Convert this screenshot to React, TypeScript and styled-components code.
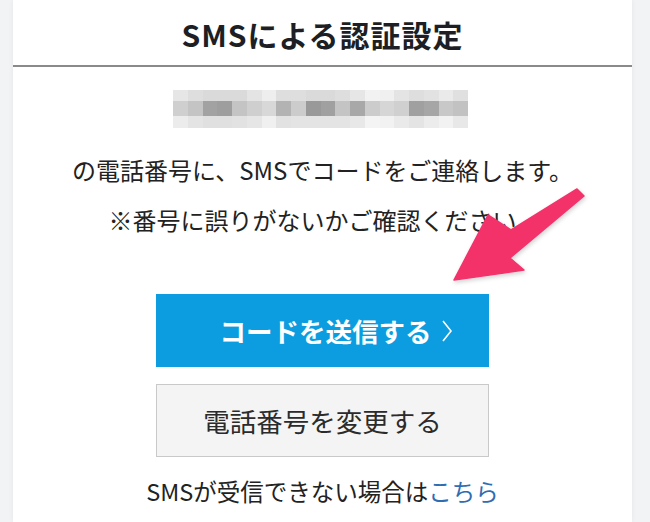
import styled, { createGlobalStyle } from "styled-components"

const GlobalStyle = createGlobalStyle`
  html, body {
    margin: 0;
    padding: 0;
    background: #f2f3f5;
  }
  body {
    font-family: "Noto Sans CJK JP", "Noto Sans", sans-serif;
    color: #222;
  }
`

// pixelated phone number, grey level of each cell, row by row
const mosaic = [
  ["e6", "de", "da", "da", "da", "e4", "ee", "de", "de", "da", "da", "de", "e6", "f2", "f0", "e4", "de", "e2", "ea", "e0"],
  ["cf", "c4", "a2", "9e", "c4", "cf", "d8", "b3", "cc", "99", "a0", "c4", "a8", "cc", "d6", "d0", "a0", "a6", "c8", "c2"],
  ["ec", "e4", "e0", "e0", "e2", "e6", "f0", "e2", "e4", "e4", "e4", "e4", "e8", "f4", "f2", "ea", "e4", "ec", "f2", "e8"],
]

function App() {
  return (
    <>
      <GlobalStyle />
      <Page>
        <Card>
          <Header>
            <Title>SMSによる認証設定</Title>
          </Header>
          <Body>
            <Mosaic>
              {mosaic.flatMap((row, r) =>
                row.map((c, i) => (
                  <Cell key={`${r}-${i}`} style={{ background: `#${c}${c}${c}` }} />
                ))
              )}
            </Mosaic>
            <Message $gap={25}>の電話番号に、SMSでコードをご連絡します。</Message>
            <Message $gap={16} $shift={20}>
              ※番号に誤りがないかご確認ください
            </Message>
            <PrimaryButton>
              コードを送信する
              <svg width="12" height="24" viewBox="0 0 12 24">
                <polyline
                  points="2,2 10,12 2,22"
                  fill="none"
                  stroke="#fff"
                  strokeWidth="1.6"
                />
              </svg>
            </PrimaryButton>
            <SecondaryButton>電話番号を変更する</SecondaryButton>
            <Footer>
              SMSが受信できない場合は<Link href="#">こちら</Link>
            </Footer>
          </Body>
        </Card>
        <Arrow viewBox="0 0 650 522">
          <defs>
            <filter id="arrowShadow" x="-20%" y="-20%" width="140%" height="140%">
              <feDropShadow dx="1" dy="2" stdDeviation="2" floodColor="#000" floodOpacity="0.18" />
            </filter>
          </defs>
          <polygon
            points="577,189 511,230 488,215 454,280 524,270 510,258 584,196"
            fill="#f3336b"
            strokeLinejoin="round"
            stroke="#f3336b"
            strokeWidth="1.5"
            filter="url(#arrowShadow)"
          />
        </Arrow>
      </Page>
    </>
  )
}

export default App

const Page = styled.div`
  position: relative;
  width: 650px;
  height: 522px;
  overflow: hidden;
`

const Card = styled.div`
  margin: 0 18px 0 13px;
  height: 522px;
  background: #fff;
  box-shadow: 0 0 5px rgba(0, 0, 0, 0.06);
`

const Header = styled.div`
  height: 67px;
  display: flex;
  align-items: center;
  justify-content: center;
  padding-top: 3px;
  box-sizing: border-box;
  border-bottom: 2px solid #8a8a8a;
`

const Title = styled.h1`
  margin: 0;
  font-size: 30px;
  font-weight: 700;
  letter-spacing: 1px;
  color: #1d1f24;
  line-height: 1;
`

const Body = styled.div`
  display: flex;
  flex-direction: column;
  align-items: center;
`

const Mosaic = styled.div`
  margin-top: 23px;
  margin-left: -4px;
  display: grid;
  grid-template-columns: repeat(20, 14.75px);
  grid-template-rows: 11px 15px 12px;
  filter: blur(0.4px);
`

const Cell = styled.div``

const Message = styled.p<{ $gap: number; $shift?: number }>`
  margin: ${(p) => p.$gap}px ${(p) => p.$shift ?? 0}px 0 0;
  font-size: 24px;
  line-height: 34px;
  color: #222;
  white-space: nowrap;
`

const ButtonBase = styled.button`
  box-sizing: border-box;
  width: 333px;
  height: 73px;
  display: flex;
  align-items: center;
  justify-content: center;
  font-family: "Noto Sans CJK JP", sans-serif;
  font-size: 26.5px;
  cursor: pointer;
  border-radius: 0;
`

const PrimaryButton = styled(ButtonBase)`
  margin-top: 57px;
  gap: 9px;
  padding: 0 0 0 27px;
  background: #0b9de0;
  border: none;
  color: #fff;
  font-weight: 700;
`

const SecondaryButton = styled(ButtonBase)`
  margin-top: 17px;
  padding: 0;
  background: #f4f4f4;
  border: 1px solid #c9c9c9;
  color: #2b2b2b;
  font-weight: 400;
`

const Footer = styled.p`
  margin: 17px 0 0;
  font-size: 23.5px;
  line-height: 34px;
  color: #222;
`

const Link = styled.a`
  color: #2f6db3;
  text-decoration: none;
`

const Arrow = styled.svg`
  position: absolute;
  left: 0;
  top: 0;
  width: 650px;
  height: 522px;
  pointer-events: none;
`
